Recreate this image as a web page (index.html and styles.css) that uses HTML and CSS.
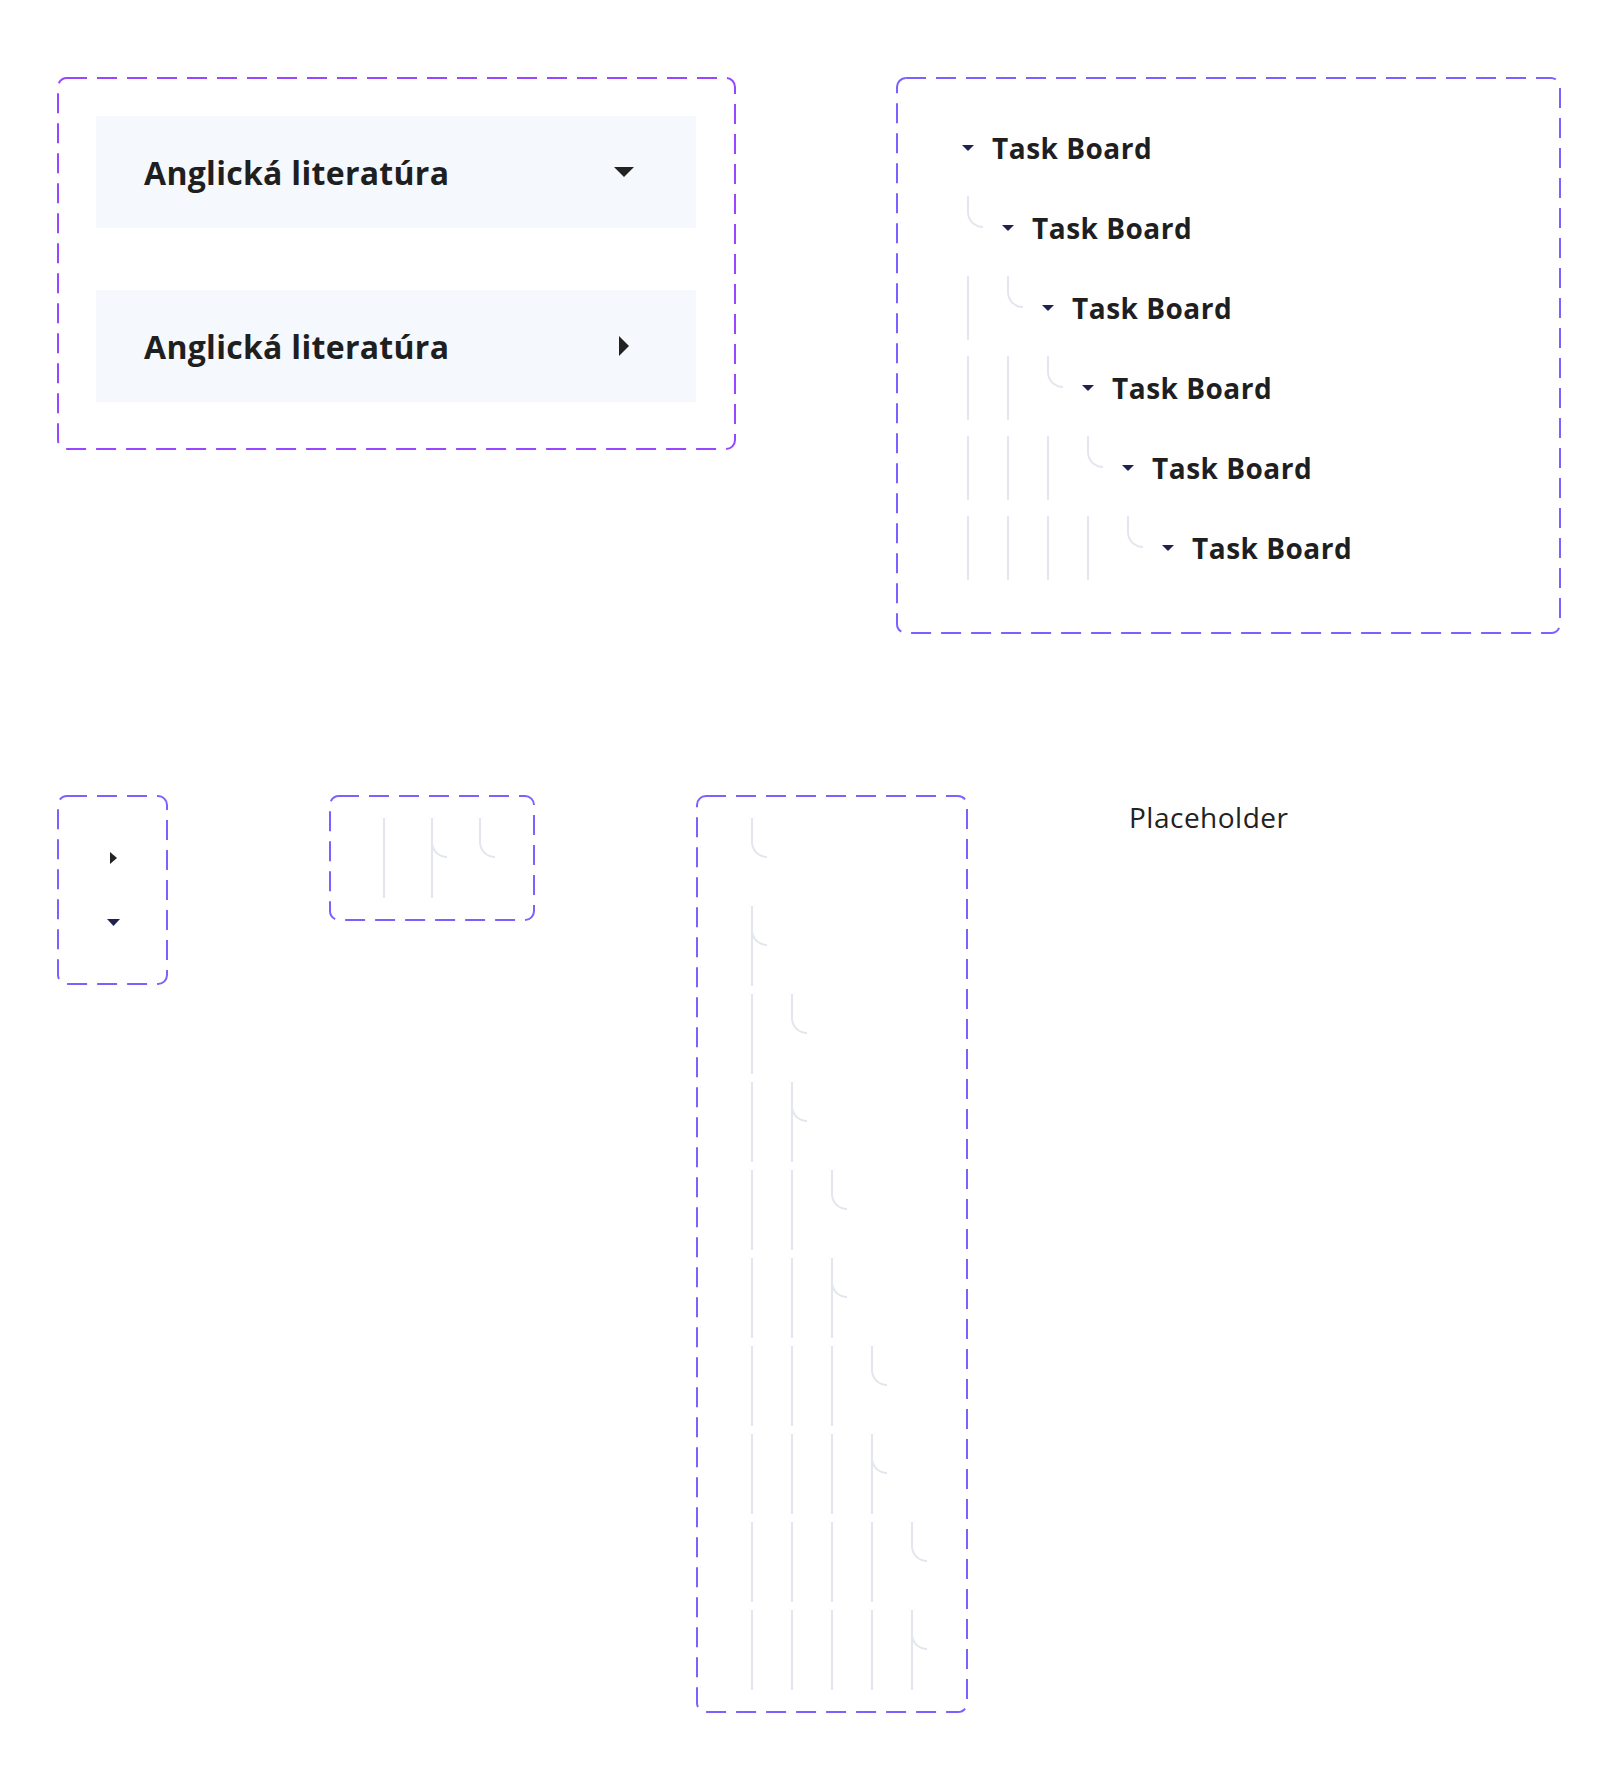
FILE: index.html
```html
<!doctype html>
<html lang="sk">
  <head>
    <meta charset="UTF-8" />
    <meta name="viewport" content="width=device-width, initial-scale=1.0" />
    <title>Accordion &amp; Tree – komponenty</title>
    <link rel="stylesheet" href="styles.css">
  </head>
  <body>
    <main class="canvas">

      <!-- Horný rad: accordion a strom -->
      <div class="row row-top">
        <section class="set set-accordion">
          <svg class="frame frame-violet"><rect rx="9" ry="9"/></svg>
          <div class="acc-item">
            <span class="acc-title">Anglická literatúra</span>
            <svg class="acc-caret" width="20" height="10" viewBox="0 0 20 10"><polygon points="0,0 20,0 10,10"/></svg>
          </div>
          <div class="acc-item">
            <span class="acc-title">Anglická literatúra</span>
            <svg class="acc-caret caret-right" width="10" height="20" viewBox="0 0 10 20"><polygon points="0,0 10,10 0,20"/></svg>
          </div>
        </section>

        <section class="set set-tree">
          <svg class="frame"><rect rx="9" ry="9"/></svg>
          <div class="tree-row">
            <span class="caret-slot"><svg width="12" height="6" viewBox="0 0 12 6"><polygon points="0,0 12,0 6,6"/></svg></span>
            <span class="tree-label">Task Board</span>
          </div>
          <div class="tree-row">
            <span class="guide"><span class="curve"></span></span>
            <span class="caret-slot"><svg width="12" height="6" viewBox="0 0 12 6"><polygon points="0,0 12,0 6,6"/></svg></span>
            <span class="tree-label">Task Board</span>
          </div>
          <div class="tree-row">
            <span class="guide line"></span>
            <span class="guide"><span class="curve"></span></span>
            <span class="caret-slot"><svg width="12" height="6" viewBox="0 0 12 6"><polygon points="0,0 12,0 6,6"/></svg></span>
            <span class="tree-label">Task Board</span>
          </div>
          <div class="tree-row">
            <span class="guide line"></span>
            <span class="guide line"></span>
            <span class="guide"><span class="curve"></span></span>
            <span class="caret-slot"><svg width="12" height="6" viewBox="0 0 12 6"><polygon points="0,0 12,0 6,6"/></svg></span>
            <span class="tree-label">Task Board</span>
          </div>
          <div class="tree-row">
            <span class="guide line"></span>
            <span class="guide line"></span>
            <span class="guide line"></span>
            <span class="guide"><span class="curve"></span></span>
            <span class="caret-slot"><svg width="12" height="6" viewBox="0 0 12 6"><polygon points="0,0 12,0 6,6"/></svg></span>
            <span class="tree-label">Task Board</span>
          </div>
          <div class="tree-row">
            <span class="guide line"></span>
            <span class="guide line"></span>
            <span class="guide line"></span>
            <span class="guide line"></span>
            <span class="guide"><span class="curve"></span></span>
            <span class="caret-slot"><svg width="12" height="6" viewBox="0 0 12 6"><polygon points="0,0 12,0 6,6"/></svg></span>
            <span class="tree-label">Task Board</span>
          </div>
        </section>
      </div>

      <!-- Dolný rad: šípky, vodiace čiary, placeholder -->
      <div class="row row-bottom">
        <section class="set set-carets">
          <svg class="frame"><rect rx="9" ry="9"/></svg>
          <div class="caret-cell">
            <svg class="caret-dark" width="7" height="12" viewBox="0 0 7 12"><polygon points="0,0 7,6 0,12"/></svg>
          </div>
          <div class="caret-cell">
            <svg class="caret-navy" width="13" height="7" viewBox="0 0 13 7"><polygon points="0,0 13,0 6.5,7"/></svg>
          </div>
        </section>

        <section class="set set-guides">
          <svg class="frame"><rect rx="9" ry="9"/></svg>
          <span class="guide line"></span>
          <span class="guide line"><span class="curve"></span></span>
          <span class="guide"><span class="curve"></span></span>
        </section>

        <section class="set set-stack">
          <svg class="frame"><rect rx="9" ry="9"/></svg>
          <div class="stack-row">
            <span class="guide"><span class="curve"></span></span>
          </div>
          <div class="stack-row">
            <span class="guide line"><span class="curve"></span></span>
          </div>
          <div class="stack-row">
            <span class="guide line"></span>
            <span class="guide"><span class="curve"></span></span>
          </div>
          <div class="stack-row">
            <span class="guide line"></span>
            <span class="guide line"><span class="curve"></span></span>
          </div>
          <div class="stack-row">
            <span class="guide line"></span>
            <span class="guide line"></span>
            <span class="guide"><span class="curve"></span></span>
          </div>
          <div class="stack-row">
            <span class="guide line"></span>
            <span class="guide line"></span>
            <span class="guide line"><span class="curve"></span></span>
          </div>
          <div class="stack-row">
            <span class="guide line"></span>
            <span class="guide line"></span>
            <span class="guide line"></span>
            <span class="guide"><span class="curve"></span></span>
          </div>
          <div class="stack-row">
            <span class="guide line"></span>
            <span class="guide line"></span>
            <span class="guide line"></span>
            <span class="guide line"><span class="curve"></span></span>
          </div>
          <div class="stack-row">
            <span class="guide line"></span>
            <span class="guide line"></span>
            <span class="guide line"></span>
            <span class="guide line"></span>
            <span class="guide"><span class="curve"></span></span>
          </div>
          <div class="stack-row">
            <span class="guide line"></span>
            <span class="guide line"></span>
            <span class="guide line"></span>
            <span class="guide line"></span>
            <span class="guide line"><span class="curve"></span></span>
          </div>
        </section>

        <p class="placeholder">Placeholder</p>
      </div>

    </main>
  </body>
</html>
```

FILE: styles.css
```css
/* Základ */
* {
  margin: 0;
  padding: 0;
  box-sizing: border-box;
}

body {
  font-family: "Open Sans", "Noto Sans", sans-serif;
  background: #ffffff;
  color: #222222;
}

.canvas {
  padding: 77px 57px;
}

.row {
  display: flex;
  align-items: flex-start;
}

.row-top {
  gap: 160px;
}

.row-bottom {
  gap: 161px;
  margin-top: 161px;
}

/* Rámik sady komponentov (prerušovaná čiara) */
.set {
  position: relative;
}

.frame {
  position: absolute;
  top: 0;
  left: 0;
  width: 100%;
  height: 100%;
  overflow: visible;
  pointer-events: none;
}

.frame rect {
  x: 1px;
  y: 1px;
  width: calc(100% - 2px);
  height: calc(100% - 2px);
  fill: none;
  stroke: #7b61ff;
  stroke-width: 2;
  stroke-dasharray: 20 10;
}

.frame-violet rect {
  stroke: #9747ff;
}

/* Accordion */
.set-accordion {
  width: 679px;
  padding: 39px 40px 48px 39px;
  display: flex;
  flex-direction: column;
  gap: 62px;
}

.acc-item {
  height: 112px;
  background: #f5f8fd;
  display: flex;
  align-items: center;
  justify-content: space-between;
  padding: 0 62px 0 48px;
}

.acc-title {
  font-size: 32px;
  font-weight: 700;
  letter-spacing: 0.3px;
  color: #1f1f1f;
}

.acc-caret {
  fill: #222222;
}

.caret-right {
  margin-right: 5px;
}

/* Strom */
.set-tree {
  width: 665px;
  padding: 39px 0 54px 52px;
  display: flex;
  flex-direction: column;
  gap: 16px;
}

.tree-row {
  height: 64px;
  display: flex;
  align-items: center;
}

.caret-slot {
  width: 40px;
  height: 100%;
  display: flex;
  align-items: center;
  justify-content: center;
  fill: #1f2151;
}

.tree-label {
  margin-left: 4px;
  font-size: 28px;
  font-weight: 700;
  letter-spacing: 0.5px;
  color: #1f1f1f;
}

/* Vodiace čiary */
.guide {
  display: block;
  width: 40px;
  height: 100%;
  flex: none;
}

.guide.line {
  background: linear-gradient(#e3e6ee, #e3e6ee) 19px 0 / 2px 100% no-repeat;
}

.curve {
  display: block;
  margin-left: 19px;
  width: 16px;
  height: 50%;
  border-left: 2px solid #e3e6ee;
  border-bottom: 2px solid #e3e6ee;
  border-bottom-left-radius: 16px;
}

/* Šípky */
.set-carets {
  width: 111px;
  padding: 31px 0 31px;
  display: flex;
  flex-direction: column;
}

.caret-cell {
  height: 64px;
  display: flex;
  align-items: center;
  justify-content: center;
}

.caret-dark {
  fill: #222222;
  margin-left: 2px;
}

.caret-navy {
  fill: #1f2151;
  margin-left: 2px;
}

.set-guides {
  width: 206px;
  height: 126px;
  padding: 23px 35px 23px 35px;
  display: flex;
  gap: 8px;
}

.set-stack {
  width: 272px;
  padding: 23px 36px 23px 36px;
  display: flex;
  flex-direction: column;
  gap: 8px;
}

.stack-row {
  height: 80px;
  display: flex;
}

.placeholder {
  margin-top: 3px;
  font-size: 28px;
  font-weight: 400;
  letter-spacing: 0.5px;
  color: #222222;
}
```
